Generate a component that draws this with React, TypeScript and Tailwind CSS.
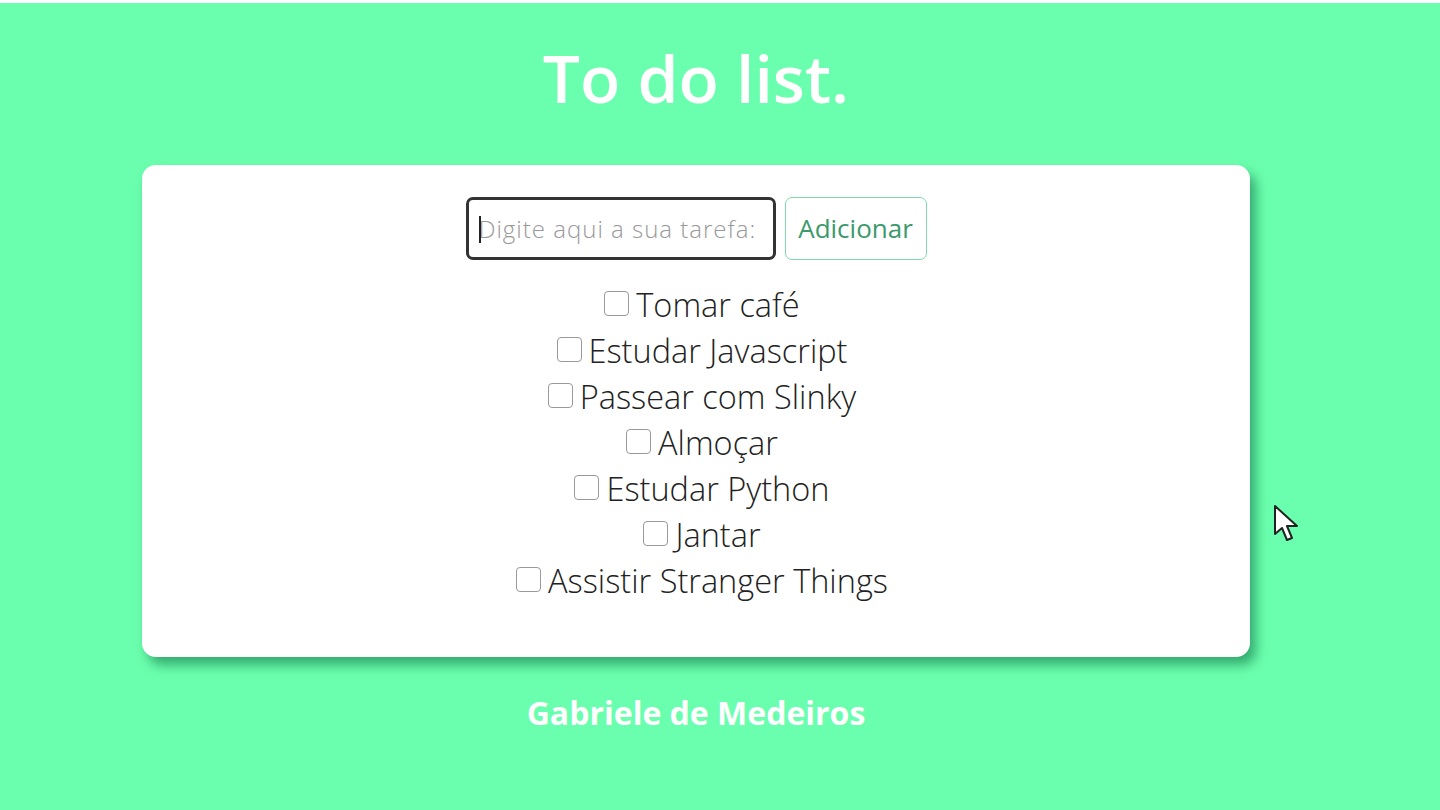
import React from "react";

const items = [
  "Tomar café",
  "Estudar Javascript",
  "Passear com Slinky",
  "Almoçar",
  "Estudar Python",
  "Jantar",
  "Assistir Stranger Things",
];

export default function App() {
  return (
    <div
      className="relative w-[1440px] h-[810px] overflow-hidden bg-white pt-[3px]"
      style={{ fontFamily: '"Open Sans", "Noto Sans", sans-serif' }}
    >
      <div className="h-[807px] bg-[#6affae] flex flex-col items-center pr-[48px]">
        <h1 className="mt-[36px] text-[66px] leading-[76px] font-semibold text-white">To do list.</h1>
        <div className="mt-[50px] w-[1108px] h-[492px] bg-white rounded-[14px] shadow-[6px_8px_12px_rgba(0,90,50,0.5)] flex flex-col items-center pt-[32px]">
          <div className="flex items-center gap-[9px]">
            <div className="relative w-[310px] h-[63px] rounded-[7px] border-[3px] border-[#333] flex items-center pl-[10px]">
              <span className="absolute left-[10px] top-[16px] w-[2px] h-[27px] bg-[#222]" />
              <span className="text-[24px] tracking-[1px] font-light text-[#999] whitespace-nowrap overflow-hidden">Digite aqui a sua tarefa:</span>
            </div>
            <button className="w-[142px] h-[63px] rounded-[7px] border border-[#7fd9ad] text-[26px] text-[#3a9a6c] bg-white">
              Adicionar
            </button>
          </div>
          <ul className="mt-[22px] ml-[12px] flex flex-col items-center">
            {items.map((t) => (
              <li key={t} className="flex items-center h-[46px]">
                <span className="w-[25px] h-[25px] rounded-[4px] border-[1.5px] border-[#999] bg-white mr-[7px] mb-[3px]" />
                <span className="text-[32.5px] font-light text-[#222] leading-[46px]">{t}</span>
              </li>
            ))}
          </ul>
        </div>
        <div className="mt-[32px] text-[32px] font-bold text-white">Gabriele de Medeiros</div>
      </div>
      <svg className="absolute left-[1273px] top-[504px]" width="28" height="42" viewBox="0 0 28 42">
        <path d="M2 2 L2 30 L9 24 L14 36 L19 34 L14 22 L24 22 Z" fill="white" stroke="#222" strokeWidth="2" strokeLinejoin="round" />
      </svg>
    </div>
  );
}
